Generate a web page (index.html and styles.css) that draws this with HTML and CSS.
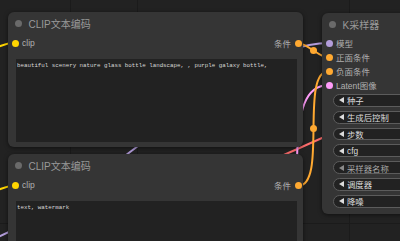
FILE: index.html
```html
<!DOCTYPE html>
<html>
<head>
<meta charset="utf-8">
<link rel="stylesheet" href="styles.css">
</head>
<body>
<div class="canvas">
  <svg class="links" width="400" height="241" viewBox="0 0 400 241">
    <path d="M-10 240 C 100 200, 230 43, 329 43" stroke="#b39ddb" stroke-width="2" fill="none"/>
    <path d="M250 170 L 340 130" stroke="#ff6e6e" stroke-width="2" fill="none"/>
    <path d="M329 85 C 305 85, 298 110, 297 160 L 295 241" stroke="#ff9cf9" stroke-width="2" fill="none"/>
    <path d="M-30 70 C -10 50, 0 43, 15 43" stroke="#ffd500" stroke-width="2" fill="none"/>
    <path d="M-30 213 C -10 193, 0 186, 15 186" stroke="#ffd500" stroke-width="2" fill="none"/>
    <path d="M298 43 C 306.6 43, 320.4 58, 329 58" stroke="#ffa931" stroke-width="2" fill="none"/>
    <path d="M298 186 C 328 186, 299 71, 329 71" stroke="#ffa931" stroke-width="2" fill="none"/>
    <circle cx="313.5" cy="50.5" r="3.5" fill="#ffa931"/>
    <circle cx="313.5" cy="128.5" r="3.5" fill="#ffa931"/>
  </svg>

  <div class="node clip-a">
    <div class="title"><span class="tdot"></span><span>CLIP文本编码</span></div>
    <div class="slot-row">
      <div class="slot-in"><span class="dot clip"></span><span>clip</span></div>
      <div class="slot-out"><span>条件</span><span class="dot cond"></span></div>
    </div>
    <div class="prompt">beautiful scenery nature glass bottle landscape, , purple galaxy bottle,</div>
  </div>

  <div class="node clip-b">
    <div class="title"><span class="tdot"></span><span>CLIP文本编码</span></div>
    <div class="slot-row">
      <div class="slot-in"><span class="dot clip"></span><span>clip</span></div>
      <div class="slot-out"><span>条件</span><span class="dot cond"></span></div>
    </div>
    <div class="prompt">text, watermark</div>
  </div>

  <div class="node ksampler">
    <div class="title"><span class="tdot"></span><span>K采样器</span></div>
    <div class="slots">
      <div class="slot-in"><span class="dot model"></span><span>模型</span></div>
      <div class="slot-in"><span class="dot cond"></span><span>正面条件</span></div>
      <div class="slot-in"><span class="dot cond"></span><span>负面条件</span></div>
      <div class="slot-in"><span class="dot latent"></span><span>Latent图像</span></div>
    </div>
    <div class="widgets">
      <div class="widget"><span class="arrow"></span><span>种子</span></div>
      <div class="widget"><span class="arrow"></span><span>生成后控制</span></div>
      <div class="widget"><span class="arrow"></span><span>步数</span></div>
      <div class="widget"><span class="arrow"></span><span>cfg</span></div>
      <div class="widget dim"><span class="arrow"></span><span>采样器名称</span></div>
      <div class="widget"><span class="arrow"></span><span>调度器</span></div>
      <div class="widget"><span class="arrow"></span><span>降噪</span></div>
    </div>
  </div>
</div>
</body>
</html>
```
FILE: styles.css
```css
html, body {
  margin: 0;
  padding: 0;
  width: 400px;
  height: 241px;
  overflow: hidden;
  background: #222222;
  font-family: "Liberation Sans", "Noto Sans CJK SC", sans-serif;
}

.canvas {
  position: relative;
  width: 400px;
  height: 241px;
  overflow: hidden;
  background-color: #222222;
  background-image:
    linear-gradient(to right, transparent 70px, #1b1b1b 70px, #1b1b1b 71px, transparent 71px),
    linear-gradient(to right, transparent 137px, #1b1b1b 137px, #1b1b1b 138px, transparent 138px),
    linear-gradient(to right, transparent 349px, #1b1b1b 349px, #1b1b1b 350px, transparent 350px),
    linear-gradient(to bottom, transparent 223px, #1b1b1b 223px, #1b1b1b 224px, transparent 224px);
}

.links {
  position: absolute;
  left: 0;
  top: 0;
}

.node {
  position: absolute;
  background: #353535;
  border-radius: 6px;
  box-shadow: 0 1px 4px rgba(0, 0, 0, 0.55);
  display: flex;
  flex-direction: column;
}

.clip-a {
  left: 8px;
  top: 12px;
  width: 295px;
  height: 135px;
}

.clip-b {
  left: 8px;
  top: 154px;
  width: 295px;
  height: 135px;
}

.ksampler {
  left: 322px;
  top: 13px;
  width: 130px;
  height: 201px;
}

.title {
  height: 22px;
  display: flex;
  align-items: center;
  gap: 7px;
  padding-left: 6.5px;
  font-size: 10px;
  color: #999999;
}

.tdot {
  width: 7px;
  height: 7px;
  border-radius: 50%;
  background: #6a6a6a;
}

.slot-row {
  height: 14px;
  margin-top: 2px;
  display: flex;
  align-items: center;
  justify-content: space-between;
  padding: 0 1.5px 0 3.5px;
  font-size: 8.5px;
  color: #aaaaaa;
}

.slot-in, .slot-out {
  display: flex;
  align-items: center;
  gap: 3.5px;
  height: 14px;
  font-size: 8.5px;
  color: #b0b0b0;
}

.slots {
  display: flex;
  flex-direction: column;
  padding-left: 3.5px;
  margin-top: 1px;
}

.dot {
  width: 7px;
  height: 7px;
  border-radius: 50%;
  flex: none;
}

.clip { background: #ffd500; }
.cond { background: #ffa931; }
.model { background: #b39ddb; }
.latent { background: #ff9cf9; }

.prompt {
  margin: 9px 6px 5px 8px;
  height: 83px;
  background: #222222;
  color: #d8d8d8;
  font-family: "Liberation Mono", monospace;
  font-size: 5.8px;
  padding: 3px 1px;
  box-sizing: border-box;
  white-space: nowrap;
  overflow: hidden;
}

.widgets {
  display: flex;
  flex-direction: column;
  gap: 4px;
  margin: 2px 11px 0 11px;
}

.widget {
  height: 12.8px;
  box-sizing: border-box;
  border: 1px solid #5c5c5c;
  border-radius: 7px;
  background: #222222;
  display: flex;
  align-items: center;
  gap: 3px;
  padding-left: 5px;
  font-size: 8.4px;
  color: #dddddd;
}

.arrow {
  width: 0;
  height: 0;
  border-top: 3px solid transparent;
  border-bottom: 3px solid transparent;
  border-right: 5px solid #dddddd;
}

.widget.dim {
  color: #a8a8a8;
}

.widget.dim .arrow {
  border-right-color: #8a8a8a;
}
```
